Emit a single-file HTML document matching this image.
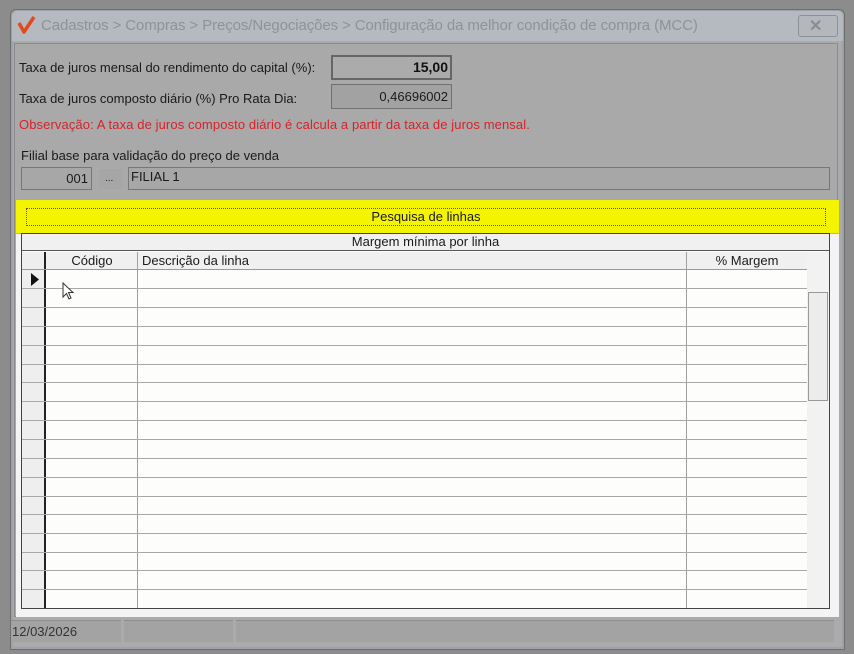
<!DOCTYPE html>
<html><head><meta charset="utf-8"><style>
*{margin:0;padding:0;box-sizing:border-box}
body{width:854px;height:654px;background:#8c8c8c;position:relative;overflow:hidden;font-family:"Liberation Sans",sans-serif;font-size:13px;color:#1a1a1a}
.a{position:absolute}
.t{position:absolute;white-space:nowrap}
.hl{position:absolute;height:1px;background:#a8a8a8}
.vl{position:absolute;width:1px;background:#a0a0a0}
</style></head><body>
<div class="a" style="left:10px;top:9px;width:835px;height:641px;background:#ababab;border:1px solid #6e6e6e;border-radius:6px 6px 0 0;box-shadow:inset 0 0 0 2px #9ea2a8"></div>
<div class="a" style="left:12px;top:11px;width:831px;height:30px;background:#b5b9c0;border-radius:5px 5px 0 0"></div>
<svg class="a" style="left:17px;top:15px" width="20" height="20" viewBox="0 0 20 20"><path d="M2 8 L7 17 L17 2" stroke="#e24a1c" stroke-width="3.5" fill="none" stroke-linejoin="round"/></svg>
<div class="t" style="left:41px;top:17px;font-size:15px;color:#8f9297;letter-spacing:-0.1px">Cadastros &gt; Compras &gt; Preços/Negociações &gt; Configuração da melhor condição de compra (MCC)</div>
<div class="a" style="left:798px;top:15px;width:40px;height:22px;border:1px solid #8c9096;border-radius:3px;background:#b4b7bc"></div>
<div class="t" style="left:809px;top:16px;font-size:16px;font-weight:bold;color:#8a8d92">✕</div>
<div class="a" style="left:14px;top:43px;width:824px;height:574px;background:#a9a9a9;border:1px solid #8a8a8a"></div>
<div class="t" style="left:19px;top:60px;letter-spacing:0px">Taxa de juros mensal do rendimento do capital (%):</div>
<div class="a" style="left:331px;top:55px;width:121px;height:25px;border:2px solid #666;background:#ababab"></div>
<div class="t" style="left:331px;top:59px;width:117px;text-align:right;font-weight:bold;font-size:14px;color:#111">15,00</div>
<div class="t" style="left:19px;top:91px;letter-spacing:0px">Taxa de juros composto diário (%) Pro Rata Dia:</div>
<div class="a" style="left:331px;top:84px;width:121px;height:25px;border:1px solid #707070;background:#a2a2a2"></div>
<div class="t" style="left:331px;top:89px;width:117px;text-align:right">0,46696002</div>
<div class="t" style="left:19px;top:117px;color:#d8222a;letter-spacing:0.1px">Observação: A taxa de juros composto diário é calcula a partir da taxa de juros mensal.</div>
<div class="t" style="left:21px;top:148px">Filial base para validação do preço de venda</div>
<div class="a" style="left:21px;top:167px;width:71px;height:23px;border:1px solid #777;background:#a7a7a7"></div>
<div class="t" style="left:21px;top:171px;width:67px;text-align:right">001</div>
<div class="a" style="left:98px;top:168px;width:26px;height:22px;border:1px solid #aaa;background:#a6a6a6"></div>
<div class="t" style="left:105px;top:173px;font-size:10px">...</div>
<div class="a" style="left:128px;top:167px;width:702px;height:23px;border:1px solid #777;background:#a7a7a7"></div>
<div class="t" style="left:131px;top:169px">FILIAL 1</div>
<div class="a" style="left:16px;top:200px;width:823px;height:417px;background:#f4f4f4"></div>
<div class="a" style="left:16px;top:200px;width:823px;height:34px;background:#f4f400;border-bottom:1px solid #c8c800"></div>
<div class="a" style="left:26px;top:208px;width:800px;height:18px;border:1px dotted #555"></div>
<div class="t" style="left:26px;top:209px;width:800px;text-align:center">Pesquisa de linhas</div>
<div class="a" style="left:21px;top:233px;width:809px;height:376px;border:1px solid #444;background:#fdfdfb"></div>
<div class="a" style="left:22px;top:234px;width:807px;height:17px;background:#f0f0f0;border-bottom:1px solid #555"></div>
<div class="t" style="left:22px;top:234px;width:807px;text-align:center">Margem mínima por linha</div>
<div class="a" style="left:22px;top:252px;width:785px;height:18px;background:#f0f0f0"></div>
<div class="t" style="left:46px;top:253px;width:92px;text-align:center">Código</div>
<div class="t" style="left:142px;top:253px">Descrição da linha</div>
<div class="t" style="left:687px;top:253px;width:120px;text-align:center">% Margem</div>
<div class="a" style="left:22px;top:252px;width:24px;height:356px;background:#eeeeee;border-right:2px solid #222"></div>
<div class="vl" style="left:137px;top:252px;height:356px"></div>
<div class="vl" style="left:686px;top:252px;height:356px"></div>
<div class="hl" style="left:22px;top:269px;width:785px;background:#999"></div>
<div class="hl" style="left:22px;top:288px;width:785px"></div>
<div class="hl" style="left:22px;top:307px;width:785px"></div>
<div class="hl" style="left:22px;top:326px;width:785px"></div>
<div class="hl" style="left:22px;top:345px;width:785px"></div>
<div class="hl" style="left:22px;top:364px;width:785px"></div>
<div class="hl" style="left:22px;top:382px;width:785px"></div>
<div class="hl" style="left:22px;top:401px;width:785px"></div>
<div class="hl" style="left:22px;top:420px;width:785px"></div>
<div class="hl" style="left:22px;top:439px;width:785px"></div>
<div class="hl" style="left:22px;top:458px;width:785px"></div>
<div class="hl" style="left:22px;top:477px;width:785px"></div>
<div class="hl" style="left:22px;top:496px;width:785px"></div>
<div class="hl" style="left:22px;top:514px;width:785px"></div>
<div class="hl" style="left:22px;top:533px;width:785px"></div>
<div class="hl" style="left:22px;top:552px;width:785px"></div>
<div class="hl" style="left:22px;top:570px;width:785px"></div>
<div class="hl" style="left:22px;top:589px;width:785px"></div>
<svg class="a" style="left:30px;top:273px" width="10" height="13"><path d="M1 0 L9 6.5 L1 13Z" fill="#111"/></svg>
<svg class="a" style="left:62px;top:282px" width="14" height="20"><path d="M1 1 L1 15 L4.5 11.5 L7 17 L9 16 L6.5 10.5 L11 10.5 Z" fill="#fff" stroke="#333" stroke-width="1"/></svg>
<div class="a" style="left:807px;top:252px;width:22px;height:356px;background:#f2f2f2"></div>
<div class="a" style="left:808px;top:292px;width:20px;height:109px;background:#ececec;border:1px solid #999"></div>
<div class="a" style="left:11px;top:620px;width:110px;height:22px;background:#a3a3a3;border-top:1px solid #8e8e8e"></div>
<div class="a" style="left:124px;top:620px;width:109px;height:22px;background:#a3a3a3;border-top:1px solid #8e8e8e"></div>
<div class="a" style="left:236px;top:620px;width:598px;height:22px;background:#a3a3a3;border-top:1px solid #8e8e8e"></div>
<div class="t" style="left:12px;top:624px;font-size:13px;color:#333">12/03/2026</div>
</body></html>
